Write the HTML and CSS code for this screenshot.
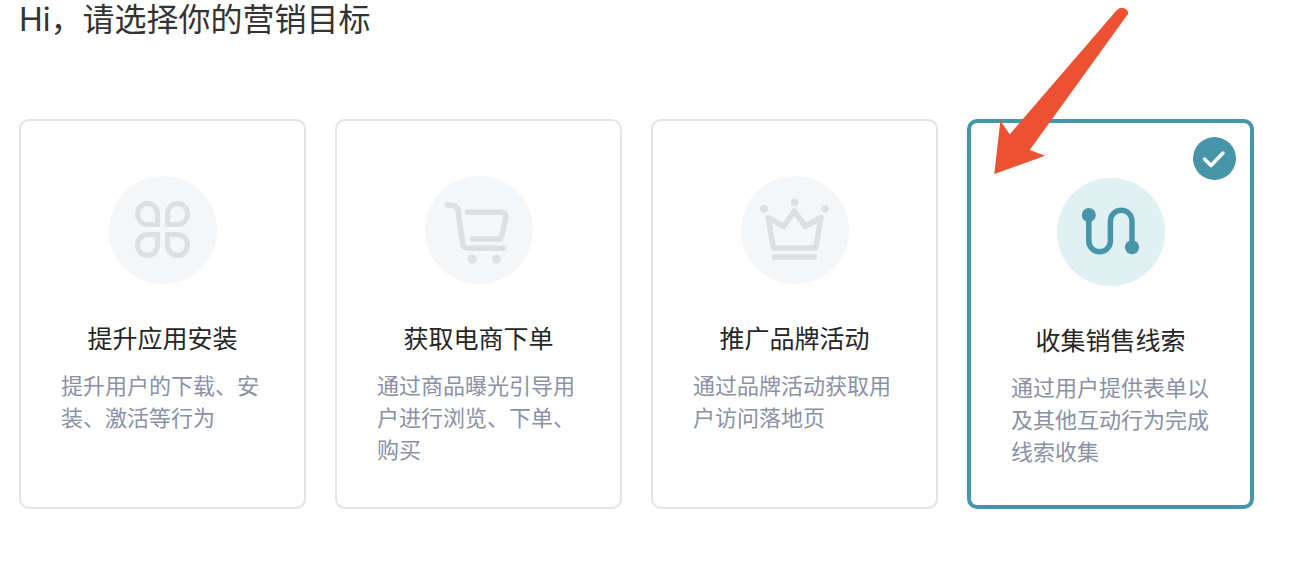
FILE: index.html
```html
<!DOCTYPE html>
<html lang="zh-CN">
<head>
  <meta charset="UTF-8" />
  <meta name="viewport" content="width=device-width, initial-scale=1" />
  <title>营销目标</title>
  <link rel="stylesheet" href="styles.css">
</head>
<body>

  <main class="page">
    <h1 class="page-title" id="goalTitle">Hi，请选择你的营销目标</h1>

    <div class="goal-list" role="radiogroup" aria-labelledby="goalTitle">
      <label class="goal">
        <input type="radio" name="goal" value="install" />
        <span class="goal-card">
          <svg class="goal-icon" viewBox="0 0 108 108" aria-hidden="true">
            <g fill="none" stroke="currentColor" stroke-width="5">
              <path d="M48.5 48.5H38.5a10 10.5 0 1 1 10-10.5z" />
              <path d="M58.5 48.5V38a10 10.5 0 1 1 10 10.5z" />
              <path d="M48.5 58.5V69a10 10.5 0 1 1-10-10.5z" />
              <path d="M58.5 58.5H68.5a10 10.5 0 1 1-10 10.5z" />
            </g>
          </svg>
          <span class="goal-name">提升应用安装</span>
          <span class="goal-desc">提升用户的下载、安装、激活等行为</span>
        </span>
      </label>

      <label class="goal">
        <input type="radio" name="goal" value="order" />
        <span class="goal-card">
          <svg class="goal-icon" viewBox="0 0 108 108" aria-hidden="true">
            <g fill="none" stroke="currentColor" stroke-width="5.5" stroke-linecap="round" stroke-linejoin="round">
              <path d="M22.3 29l5.7.8q4.6.7 5.2 5.2L37.6 67q.7 5.3 5.9 5.3H78.5" />
              <path d="M42.5 36.3H76q6 0 4.7 5.7l-4 18.5q-.6 2.5-3 2.5H47.5" />
            </g>
            <circle cx="47.3" cy="83" r="4.5" fill="currentColor" />
            <circle cx="71.5" cy="83" r="4.5" fill="currentColor" />
          </svg>
          <span class="goal-name">获取电商下单</span>
          <span class="goal-desc">通过商品曝光引导用户进行浏览、下单、购买</span>
        </span>
      </label>

      <label class="goal">
        <input type="radio" name="goal" value="brand" />
        <span class="goal-card">
          <svg class="goal-icon" viewBox="0 0 108 108" aria-hidden="true">
            <g fill="none" stroke="currentColor" stroke-width="5.5" stroke-linecap="round" stroke-linejoin="round">
              <path d="M27 41.5l15.7 9 10.8-15.5 10.8 15.5 15.7-9-5.3 30.5H32.5z" />
              <path d="M33.5 81H73.5" />
            </g>
            <circle cx="23" cy="32.7" r="3.8" fill="currentColor" />
            <circle cx="53.5" cy="26.3" r="3.8" fill="currentColor" />
            <circle cx="84" cy="32.7" r="3.8" fill="currentColor" />
          </svg>
          <span class="goal-name">推广品牌活动</span>
          <span class="goal-desc">通过品牌活动获取用户访问落地页</span>
        </span>
      </label>

      <label class="goal">
        <input type="radio" name="goal" value="leads" checked />
        <span class="goal-card">
          <svg class="goal-icon" viewBox="0 0 108 108" aria-hidden="true">
            <path d="M31.8 37V63a10.8 10.8 0 0 0 21.6 0V43a10.8 10.8 0 0 1 21.6 0V69" fill="none" stroke="currentColor" stroke-width="5.5" />
            <circle cx="31.8" cy="37" r="7" fill="currentColor" />
            <circle cx="75" cy="69.3" r="7" fill="currentColor" />
          </svg>
          <span class="goal-name">收集销售线索</span>
          <span class="goal-desc">通过用户提供表单以及其他互动行为完成线索收集</span>
          <svg class="goal-check" viewBox="0 0 43 43" aria-hidden="true">
            <circle cx="21.5" cy="21.5" r="21.5" fill="currentColor" />
            <path d="M11.5 22l6.5 6.5L30 16" fill="none" stroke="#fff" stroke-width="3.5" stroke-linecap="round" stroke-linejoin="round" />
          </svg>
          <svg class="goal-arrow" viewBox="0 0 142 172" aria-hidden="true">
            <path d="M4.3 169L10.3 115.7 19.7 129.3 126 6Q130.500 .6 135.500 4T136.500 11L39.700 145 55 150.700z" fill="currentColor" />
          </svg>
        </span>
      </label>
    </div>
  </main>

</body>
</html>
```

FILE: styles.css
```css
* {
  box-sizing: border-box;
}

body {
  margin: 0;
  background: #fff;
  font-family: "Noto Sans CJK SC", "Noto Sans", sans-serif;
}

.page {
  padding: 0 44px 40px 19px;
}

.page-title {
  margin: 0 0 79px;
  font-family: Inter, "Noto Sans CJK SC", sans-serif;
  font-size: 32px;
  font-weight: 400;
  line-height: 40px;
  color: #333;
}

.goal-list {
  display: grid;
  grid-template-columns: repeat(4, 1fr);
  gap: 29px;
}

.goal {
  display: flex;
  position: relative;
  cursor: pointer;
}

.goal input {
  position: absolute;
  margin: 0;
  opacity: 0;
}

.goal-card {
  display: flex;
  flex-direction: column;
  align-items: center;
  position: relative;
  width: 100%;
  padding: 55px 40px 39px;
  border: 2px solid #e3e3ea;
  border-radius: 10px;
}

.goal-icon {
  width: 108px;
  height: 108px;
  margin-bottom: 35px;
  border-radius: 50%;
  background: #f4f6f8;
  color: #dce0e3;
}

.goal-name {
  margin-bottom: 13px;
  font-size: 25px;
  line-height: 36px;
  color: #262626;
}

.goal-desc {
  width: 100%;
  font-size: 22px;
  line-height: 32px;
  color: #8b91a4;
}

/* selected card */
.goal input:checked + .goal-card {
  border: 4px solid #4795a9;
}

.goal input:checked + .goal-card .goal-icon {
  background: #e0f0f3;
  color: #4795a9;
}

.goal-check {
  position: absolute;
  top: 14px;
  right: 14px;
  width: 43px;
  height: 43px;
  color: #4795a9;
}

.goal-arrow {
  position: absolute;
  top: -118px;
  left: 19px;
  width: 142px;
  height: 172px;
  color: #ec5232;
}
```
